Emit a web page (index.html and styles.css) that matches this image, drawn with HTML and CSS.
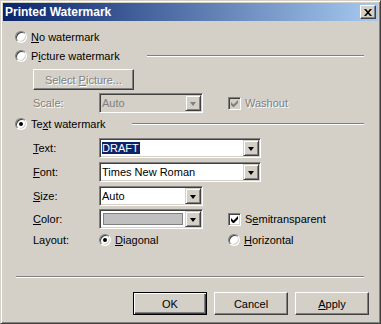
FILE: index.html
```html
<html><head>
<title>Printed Watermark</title>
<link rel="stylesheet" href="styles.css">
</head><body>

<div class="window">
<div class="titlebar">
<span class="title">Printed Watermark</span>
<div class="close"><svg width="8" height="7" viewBox="0 0 8 7"><path d="M0 0h2l2 2.2L6 0h2L5 3.5 8 7H6L4 4.8 2 7H0l3-3.5z" fill="#000"/></svg></div>
</div>

<div class="content">
<div class="row r1"><span class="radio"></span><span class="lbl"><u>N</u>o watermark</span></div>
<div class="row r2"><span class="radio"></span><span class="lbl">P<u>i</u>cture watermark</span><span class="etch picline"></span></div>
<div class="row r3"><div class="btn pic off"><span>Select <u>P</u>icture...</span></div></div>
<div class="row r4">
<span class="flabel off">Scale:</span>
<div class="combo short dis"><span class="val">Auto</span><span class="drop"></span></div>
<span class="check dis"><svg width="7" height="7" viewBox="0 0 7 7"><path d="M0 2v3l2 2h1l4-4V0L2.5 4.5z" fill="#808080"/></svg></span>
<span class="lbl off">Washout</span>
</div>
<div class="row r5"><span class="radio on"></span><span class="lbl">Te<u>x</u>t watermark</span><span class="etch textline"></span></div>
<div class="row r6">
<span class="flabel"><u>T</u>ext:</span>
<div class="combo long"><span class="val"><span class="sel">DRAFT</span></span><span class="drop"></span></div>
</div>
<div class="row r7">
<span class="flabel"><u>F</u>ont:</span>
<div class="combo long"><span class="val">Times New Roman</span><span class="drop"></span></div>
</div>
<div class="row r8">
<span class="flabel"><u>S</u>ize:</span>
<div class="combo short"><span class="val">Auto</span><span class="drop"></span></div>
</div>
<div class="row r9">
<span class="flabel"><u>C</u>olor:</span>
<div class="combo short"><span class="swatch"></span><span class="drop"></span></div>
<span class="check"><svg width="7" height="7" viewBox="0 0 7 7"><path d="M0 2v3l2 2h1l4-4V0L2.5 4.5z" fill="#000"/></svg></span>
<span class="lbl">S<u>e</u>mitransparent</span>
</div>
<div class="row r10">
<span class="flabel">Layout:</span>
<div class="opt"><span class="radio on"></span><span class="lbl"><u>D</u>iagonal</span></div>
<div class="opt"><span class="radio"></span><span class="lbl"><u>H</u>orizontal</span></div>
</div>
<div class="etch bottomline"></div>
</div>

<div class="buttons">
<div class="btn def">OK</div>
<div class="btn">Cancel</div>
<div class="btn"><span><u>A</u>pply</span></div>
</div>
</div>

</body></html>
```
FILE: styles.css
```css
body{margin:0;font-family:"Liberation Sans",Arial,sans-serif;font-size:11px;color:#000;background:#d4d0c8;}
u{text-decoration:underline;text-underline-offset:1px;}

.window{width:381px;height:324px;box-sizing:border-box;background:#d4d0c8;border:1px solid;border-color:#d4d0c8 #404040 #404040 #d4d0c8;box-shadow:inset 1px 1px #fff,inset -1px -1px #808080;padding:2px;}

.titlebar{height:18px;display:flex;align-items:center;justify-content:space-between;padding:0 2px 0 2px;background:linear-gradient(to right,#0a246a,#a6caf0);}
.title{color:#fff;font-weight:bold;font-size:12px;}
.close{width:16px;height:14px;box-sizing:border-box;background:#d4d0c8;border:1px solid;border-color:#fff #404040 #404040 #fff;box-shadow:inset -1px -1px #808080;display:flex;align-items:center;justify-content:center;}

.content{padding:7px 14px 0 12px;}
.row{display:flex;align-items:center;}
.r1{height:18px;}
.r2{height:18px;margin-top:1px;}
.r3{height:21px;margin-top:4px;padding-left:18px;}
.r4{height:20px;margin-top:3px;}
.r5{height:18px;margin-top:2px;}
.r6{height:20px;margin-top:5px;}
.r7{height:20px;margin-top:4px;}
.r8{height:20px;margin-top:4px;}
.r9{height:20px;margin-top:3px;}
.r10{height:18px;margin-top:2px;}

.lbl{margin-left:4px;white-space:nowrap;}
.flabel{width:66px;margin-left:18px;flex:none;}
.off{color:#808080;text-shadow:1px 1px #fff;}
.opt{display:flex;align-items:center;width:129px;flex:none;}

.radio{width:12px;height:12px;box-sizing:border-box;flex:none;border-radius:50%;border:1px solid;border-color:#808080 #fff #fff #808080;box-shadow:inset 1px 1px #404040,inset -1px -1px #d4d0c8;background:#fff;display:flex;align-items:center;justify-content:center;}
.radio.on::after{content:'';width:4px;height:4px;border-radius:50%;background:#000;}

.check{width:13px;height:13px;box-sizing:border-box;flex:none;margin-left:25px;border:1px solid;border-color:#808080 #fff #fff #808080;box-shadow:inset 1px 1px #404040,inset -1px -1px #d4d0c8;background:#fff;display:flex;align-items:center;justify-content:center;}
.check.dis{background:#d4d0c8;}

.etch{height:0;border-top:1px solid #808080;border-bottom:1px solid #fff;}
.picline{flex:0 0 217px;margin-left:auto;}
.textline{flex:0 0 232px;margin-left:auto;}
.bottomline{margin-top:27px;margin-left:1px;}

.combo{height:20px;box-sizing:border-box;flex:none;border:1px solid;border-color:#808080 #fff #fff #808080;box-shadow:inset 1px 1px #404040,inset -1px -1px #d4d0c8;background:#fff;display:flex;align-items:center;padding:1px;}
.combo.long{width:162px;}
.combo.short{width:104px;}
.combo.dis{background:#d4d0c8;color:#808080;}
.val{flex:1;padding-left:1px;white-space:nowrap;overflow:hidden;}
.sel{background:#0a246a;color:#fff;padding:1px 1px 1px 0;}
.drop{width:16px;height:100%;box-sizing:border-box;flex:none;background:#d4d0c8;border:1px solid;border-color:#d4d0c8 #404040 #404040 #d4d0c8;box-shadow:inset 1px 1px #fff,inset -1px -1px #808080;display:flex;align-items:center;justify-content:center;}
.drop::after{content:'';width:0;height:0;border-left:3.5px solid transparent;border-right:3.5px solid transparent;border-top:4px solid #000;margin-top:1px;}
.dis .drop::after{border-top-color:#808080;}
.swatch{flex:1;align-self:stretch;margin:2px;border:1px solid #808080;background:#c0c0c0;}

.btn{width:74px;height:23px;box-sizing:border-box;border:1px solid;border-color:#fff #404040 #404040 #fff;box-shadow:inset -1px -1px #808080;display:flex;align-items:center;justify-content:center;background:#d4d0c8;}
.btn.pic{width:101px;height:21px;}
.btn.def{border:1px solid #000;box-shadow:inset 1px 1px #fff,inset -1px -1px #404040,inset -2px -2px #808080;}

.buttons{display:flex;justify-content:flex-end;gap:7px;margin-top:14px;padding-right:9px;}
```
